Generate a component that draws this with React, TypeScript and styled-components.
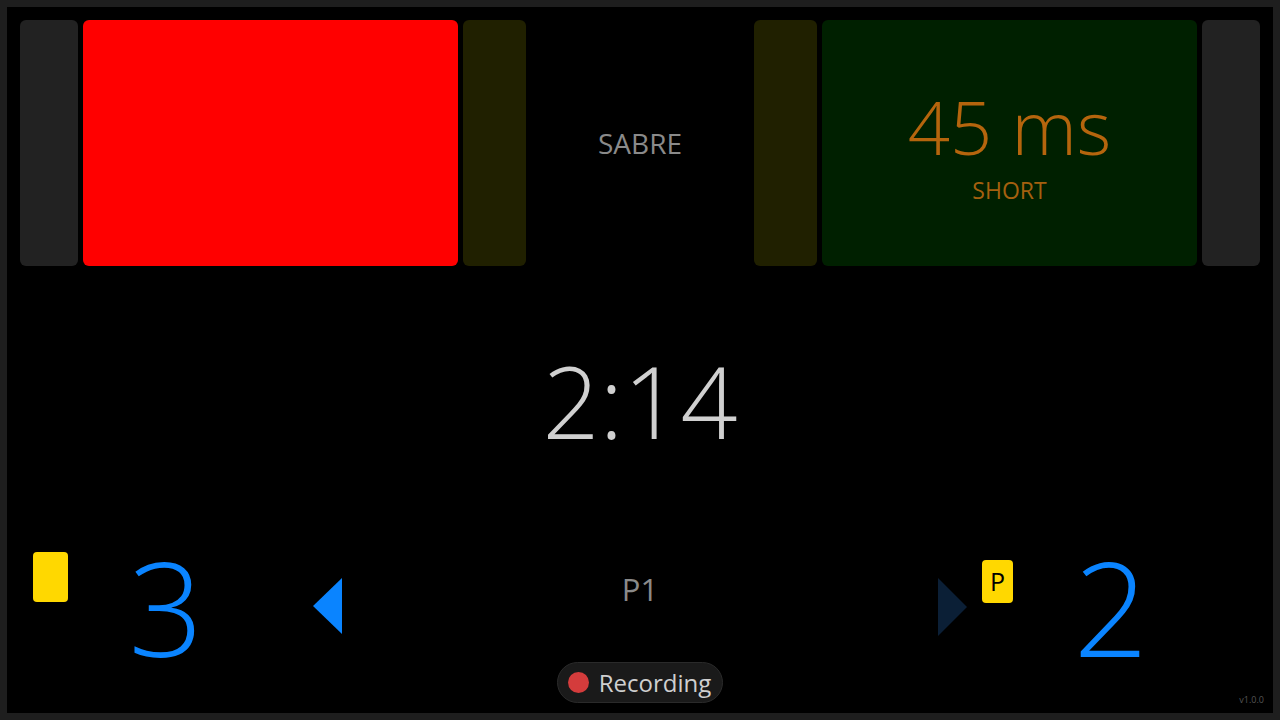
import styled, { createGlobalStyle } from "styled-components";

const GlobalStyle = createGlobalStyle`
  html, body {
    margin: 0;
    padding: 0;
    background: #000;
  }
  body {
    font-family: "Open Sans", "Noto Sans", sans-serif;
  }
`;

const Screen = styled.div`
  position: relative;
  box-sizing: border-box;
  width: 1280px;
  height: 720px;
  border: 7px solid #1e1e1e;
  background: #000;
  padding: 13px 13px 10px;
  display: flex;
  flex-direction: column;
  overflow: hidden;
`;

const TopRow = styled.div`
  height: 246px;
  display: flex;
  gap: 5px;
  flex-shrink: 0;
`;

const Panel = styled.div<{ $w?: number; $bg: string }>`
  width: ${(p) => (p.$w ? `${p.$w}px` : "auto")};
  flex: ${(p) => (p.$w ? "0 0 auto" : "1")};
  background: ${(p) => p.$bg};
  border-radius: 6px;
`;

const LightPanel = styled(Panel)`
  display: flex;
  flex-direction: column;
  align-items: center;
  justify-content: center;
  padding-bottom: 8px;
  box-sizing: border-box;
`;

const WeaponBox = styled.div`
  flex: 1;
  display: flex;
  align-items: center;
  justify-content: center;
  color: #8a8a8a;
  font-size: 28px;
  line-height: 1;
  font-weight: 400;
`;

const Timing = styled.div`
  color: #b5650d;
  font-size: 74px;
  font-weight: 300;
  line-height: 100px;
`;

const TimingLabel = styled.div`
  color: #a5600f;
  font-size: 23px;
  line-height: 24px;
  margin-top: 1px;
`;

const Middle = styled.div`
  flex: 1;
  display: flex;
  align-items: center;
  justify-content: center;
  padding-bottom: 17px;
`;

const Clock = styled.div`
  color: #d0d0d0;
  font-size: 100px;
  font-weight: 300;
  line-height: 1;
`;

const BottomRow = styled.div`
  height: 110px;
  display: flex;
  flex-shrink: 0;
`;

const Side = styled.div`
  width: 506px;
  display: flex;
  align-items: flex-start;
`;

const Center = styled.div`
  flex: 1;
  display: flex;
  justify-content: center;
`;

const Period = styled.div`
  margin-top: 24px;
  color: #8a8a8a;
  font-size: 31px;
  line-height: 1;
`;

const Card = styled.div<{ $ml: number; $mt: number; $w: number; $h: number }>`
  margin-left: ${(p) => p.$ml}px;
  margin-top: ${(p) => p.$mt}px;
  width: ${(p) => p.$w}px;
  height: ${(p) => p.$h}px;
  background: #ffd800;
  border-radius: 4px;
  display: flex;
  align-items: center;
  justify-content: center;
  color: #000;
  font-size: 25px;
  line-height: 1;
`;

const Score = styled.div<{ $ml: number }>`
  margin-left: ${(p) => p.$ml}px;
  width: 100px;
  text-align: center;
  color: #0a84ff;
  font-size: 131px;
  font-weight: 300;
  line-height: 110px;
  margin-top: 1px;
`;

const Arrow = styled.svg<{ $ml: number }>`
  margin-left: ${(p) => p.$ml}px;
  margin-top: 28px;
  display: block;
`;

const RecordPill = styled.div`
  align-self: center;
  margin-top: 2px;
  box-sizing: border-box;
  height: 41px;
  display: flex;
  align-items: center;
  gap: 10px;
  padding: 0 11px 0 10px;
  background: #1a1a1a;
  border: 1px solid #2a2a2a;
  border-radius: 21px;
  color: #cfcfcf;
  font-size: 24px;
  line-height: 1;
`;

const Dot = styled.span`
  width: 21px;
  height: 21px;
  border-radius: 50%;
  background: #d43c3c;
`;

const Version = styled.div`
  position: absolute;
  right: 9px;
  bottom: 9px;
  color: #555;
  font-size: 9px;
  line-height: 1;
`;

const App = () => {
  return (
    <>
      <GlobalStyle />
      <Screen>
        <TopRow>
          <Panel $w={58} $bg="#222222" />
          <Panel $w={375} $bg="#ff0000" />
          <Panel $w={63} $bg="#202000" />
          <WeaponBox>SABRE</WeaponBox>
          <Panel $w={63} $bg="#202000" />
          <LightPanel $w={375} $bg="#002000">
            <Timing>45 ms</Timing>
            <TimingLabel>SHORT</TimingLabel>
          </LightPanel>
          <Panel $w={58} $bg="#222222" />
        </TopRow>

        <Middle>
          <Clock>2:14</Clock>
        </Middle>

        <BottomRow>
          <Side>
            <Card $ml={13} $mt={2} $w={35} $h={50} />
            <Score $ml={48}>3</Score>
            <Arrow $ml={97} width="29" height="56" viewBox="0 0 29 56">
              <polygon points="29,0 29,56 0,28" fill="#0a84ff" />
            </Arrow>
          </Side>
          <Center>
            <Period>P1</Period>
          </Center>
          <Side>
            <Arrow $ml={184} width="29" height="58" viewBox="0 0 29 58">
              <polygon points="0,0 0,58 29,29" fill="#0b1f36" />
            </Arrow>
            <Card $ml={15} $mt={10} $w={31} $h={43}>P</Card>
            <Score $ml={48}>2</Score>
          </Side>
        </BottomRow>

        <RecordPill>
          <Dot />
          Recording
        </RecordPill>

        <Version>v1.0.0</Version>
      </Screen>
    </>
  );
};

export default App;
